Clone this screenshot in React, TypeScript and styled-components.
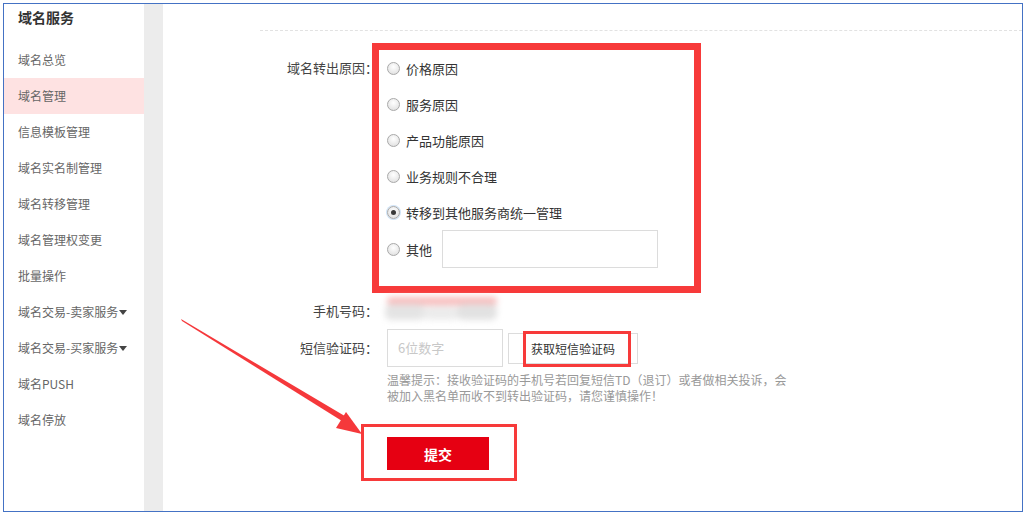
import React from "react";
import styled, { createGlobalStyle } from "styled-components";

const GlobalStyle = createGlobalStyle`
    html, body {
        margin: 0;
        padding: 0;
        background: #fff;
    }
    body {
        font-family: "Noto Sans CJK SC", "Noto Sans", sans-serif;
        color: #333;
    }
`;

const Page = styled.div`
    position: relative;
    width: 1028px;
    height: 516px;
    padding: 3px;
    box-sizing: border-box;
`;

const Frame = styled.div`
    display: flex;
    width: 1020px;
    height: 509px;
    box-sizing: border-box;
    border: 1px solid #4472c4;
    overflow: hidden;
`;

const Sidebar = styled.aside`
    width: 140px;
    flex-shrink: 0;
    background: #fff;
`;

const SideTitle = styled.div`
    height: 38px;
    padding-left: 14px;
    line-height: 26px;
    font-size: 14px;
    font-weight: 700;
    color: #333;
`;

const SideItem = styled.div<{ $active?: boolean }>`
    height: 36px;
    line-height: 36px;
    padding-left: 14px;
    font-size: 12px;
    color: #666;
    background: ${({ $active }) => ($active ? "#fee2e2" : "transparent")};
    white-space: nowrap;
`;

const Caret = styled.span`
    display: inline-block;
    width: 0;
    height: 0;
    margin-left: 1px;
    vertical-align: 2px;
    border-left: 4px solid transparent;
    border-right: 4px solid transparent;
    border-top: 5px solid #444;
`;

const GrayBar = styled.div`
    width: 19px;
    flex-shrink: 0;
    background: #ececec;
`;

const Main = styled.main`
    flex: 1;
    padding-top: 26px;
    padding-left: 97px;
`;

const Divider = styled.div`
    border-top: 1px dashed #e2e2e2;
`;

const Form = styled.div`
    display: flex;
    flex-direction: column;
    padding-top: 19px;
`;

const Row = styled.div<{ $mt?: number }>`
    display: flex;
    align-items: flex-start;
    margin-top: ${({ $mt }) => $mt ?? 0}px;
`;

const Label = styled.div<{ $h?: number }>`
    width: 118px;
    padding-right: 7px;
    flex-shrink: 0;
    text-align: right;
    font-size: 13px;
    color: #444;
    height: ${({ $h }) => $h ?? 36}px;
    line-height: ${({ $h }) => $h ?? 36}px;
`;

const Field = styled.div`
    position: relative;
    display: flex;
    flex-direction: column;
`;

const Option = styled.label<{ $h?: number }>`
    display: flex;
    align-items: center;
    height: ${({ $h }) => $h ?? 36}px;
    padding-left: 2px;
    font-size: 13px;
    color: #333;
`;

const Radio = styled.span<{ $checked?: boolean }>`
    position: relative;
    width: 11px;
    height: 11px;
    margin-right: 6px;
    border-radius: 50%;
    border: 1px solid #a9a9a9;
    background: radial-gradient(circle at 50% 35%, #ffffff 0%, #e6e6e6 70%, #d4d4d4 100%);
    box-shadow: ${({ $checked }) => ($checked ? "0 0 0 1px #cfe3f7" : "none")};

    &::after {
        content: "";
        display: ${({ $checked }) => ($checked ? "block" : "none")};
        position: absolute;
        left: 3px;
        top: 3px;
        width: 5px;
        height: 5px;
        border-radius: 50%;
        background: #3a3a3a;
    }
`;

const OtherInput = styled.div`
    width: 214px;
    height: 36px;
    margin-left: 10px;
    border: 1px solid #dcdcdc;
    background: #fff;
`;

const Mark = styled.div<{ $l: number; $t: number; $w: number; $h: number; $b: number }>`
    position: absolute;
    left: ${({ $l }) => $l}px;
    top: ${({ $t }) => $t}px;
    width: ${({ $w }) => $w}px;
    height: ${({ $h }) => $h}px;
    box-sizing: border-box;
    border: ${({ $b }) => $b}px solid #f73a3a;
    pointer-events: none;
`;

const Masked = styled.div`
    position: relative;
    width: 117px;
    height: 26px;
    margin: 4px 0 0 -2px;
    filter: blur(3px);
`;

const MaskBand = styled.div<{ $c: string; $l: number; $t: number; $w: number; $h: number }>`
    position: absolute;
    left: ${({ $l }) => $l}px;
    top: ${({ $t }) => $t}px;
    width: ${({ $w }) => $w}px;
    height: ${({ $h }) => $h}px;
    background: ${({ $c }) => $c};
    border-radius: 6px;
`;

const CodeRow = styled.div`
    display: flex;
    align-items: center;
    gap: 5px;
    padding-left: 2px;
`;

const CodeInput = styled.div`
    width: 104px;
    height: 36px;
    line-height: 36px;
    padding-left: 10px;
    border: 1px solid #dcdcdc;
    font-size: 13px;
    color: #c8c8c8;
`;

const CodeButton = styled.div`
    position: relative;
    width: 128px;
    height: 29px;
    line-height: 29px;
    text-align: center;
    border: 1px solid #dcdcdc;
    font-size: 12px;
    color: #333;
`;

const Hint = styled.p`
    margin: 5px 0 0 2px;
    width: 400px;
    font-size: 12px;
    line-height: 16px;
    color: #999;
`;

const SubmitWrap = styled.div`
    position: relative;
    margin: 33px 0 0 127px;
    width: 102px;
`;

const Submit = styled.button`
    display: block;
    width: 102px;
    height: 33px;
    padding: 0;
    border: none;
    background: #e60012;
    color: #fff;
    font-family: inherit;
    font-size: 14px;
    font-weight: 700;
`;

const Overlay = styled.svg`
    position: absolute;
    left: 0;
    top: 0;
    pointer-events: none;
`;

const menu = [
    "域名总览",
    "域名管理",
    "信息模板管理",
    "域名实名制管理",
    "域名转移管理",
    "域名管理权变更",
    "批量操作",
    "域名交易-卖家服务",
    "域名交易-买家服务",
    "域名PUSH",
    "域名停放",
];

const reasons = ["价格原因", "服务原因", "产品功能原因", "业务规则不合理", "转移到其他服务商统一管理"];

const App = () => {
    return (
        <Page>
            <GlobalStyle />
            <Frame>
                <Sidebar>
                    <SideTitle>域名服务</SideTitle>
                    {menu.map((m) => (
                        <SideItem key={m} $active={m === "域名管理"}>
                            {m}
                            {m.startsWith("域名交易") && <Caret />}
                        </SideItem>
                    ))}
                </Sidebar>
                <GrayBar />
                <Main>
                    <Divider />
                    <Form>
                        <Row>
                            <Label>域名转出原因：</Label>
                            <Field>
                                {reasons.map((r, i) => (
                                    <Option key={r}>
                                        <Radio $checked={i === 4} />
                                        {r}
                                    </Option>
                                ))}
                                <Option $h={38}>
                                    <Radio />
                                    其他
                                    <OtherInput />
                                </Option>
                                <Mark $l={-13} $t={-7} $w={329} $h={250} $b={7} />
                            </Field>
                        </Row>
                        <Row $mt={25}>
                            <Label>手机号码：</Label>
                            <Masked>
                                <MaskBand $c="#f8bcbc" $l={4} $t={0} $w={110} $h={8} />
                                <MaskBand $c="#e4e4e4" $l={2} $t={7} $w={40} $h={16} />
                                <MaskBand $c="#ececec" $l={40} $t={9} $w={36} $h={14} />
                                <MaskBand $c="#e2e2e2" $l={74} $t={7} $w={40} $h={16} />
                            </Masked>
                        </Row>
                        <Row>
                            <Label $h={38}>短信验证码：</Label>
                            <div>
                                <CodeRow>
                                    <CodeInput>6位数字</CodeInput>
                                    <CodeButton>
                                        获取短信验证码
                                        <Mark $l={14} $t={-3} $w={108} $h={36} $b={3} />
                                    </CodeButton>
                                </CodeRow>
                                <Hint>
                                    温馨提示：接收验证码的手机号若回复短信TD（退订）或者做相关投诉，会被加入黑名单而收不到转出验证码，请您谨慎操作！
                                </Hint>
                            </div>
                        </Row>
                        <SubmitWrap>
                            <Submit>提交</Submit>
                            <Mark $l={-26} $t={-13} $w={156} $h={57} $b={3} />
                        </SubmitWrap>
                    </Form>
                </Main>
            </Frame>
            <Overlay width="1028" height="516" viewBox="0 0 1028 516">
                <polygon points="181,319 182,321 346,423.5 349,418.5" fill="#f5383b" />
                <polygon points="362,434 336,428 346,412" fill="#f5383b" />
            </Overlay>
        </Page>
    );
};

export default App;
